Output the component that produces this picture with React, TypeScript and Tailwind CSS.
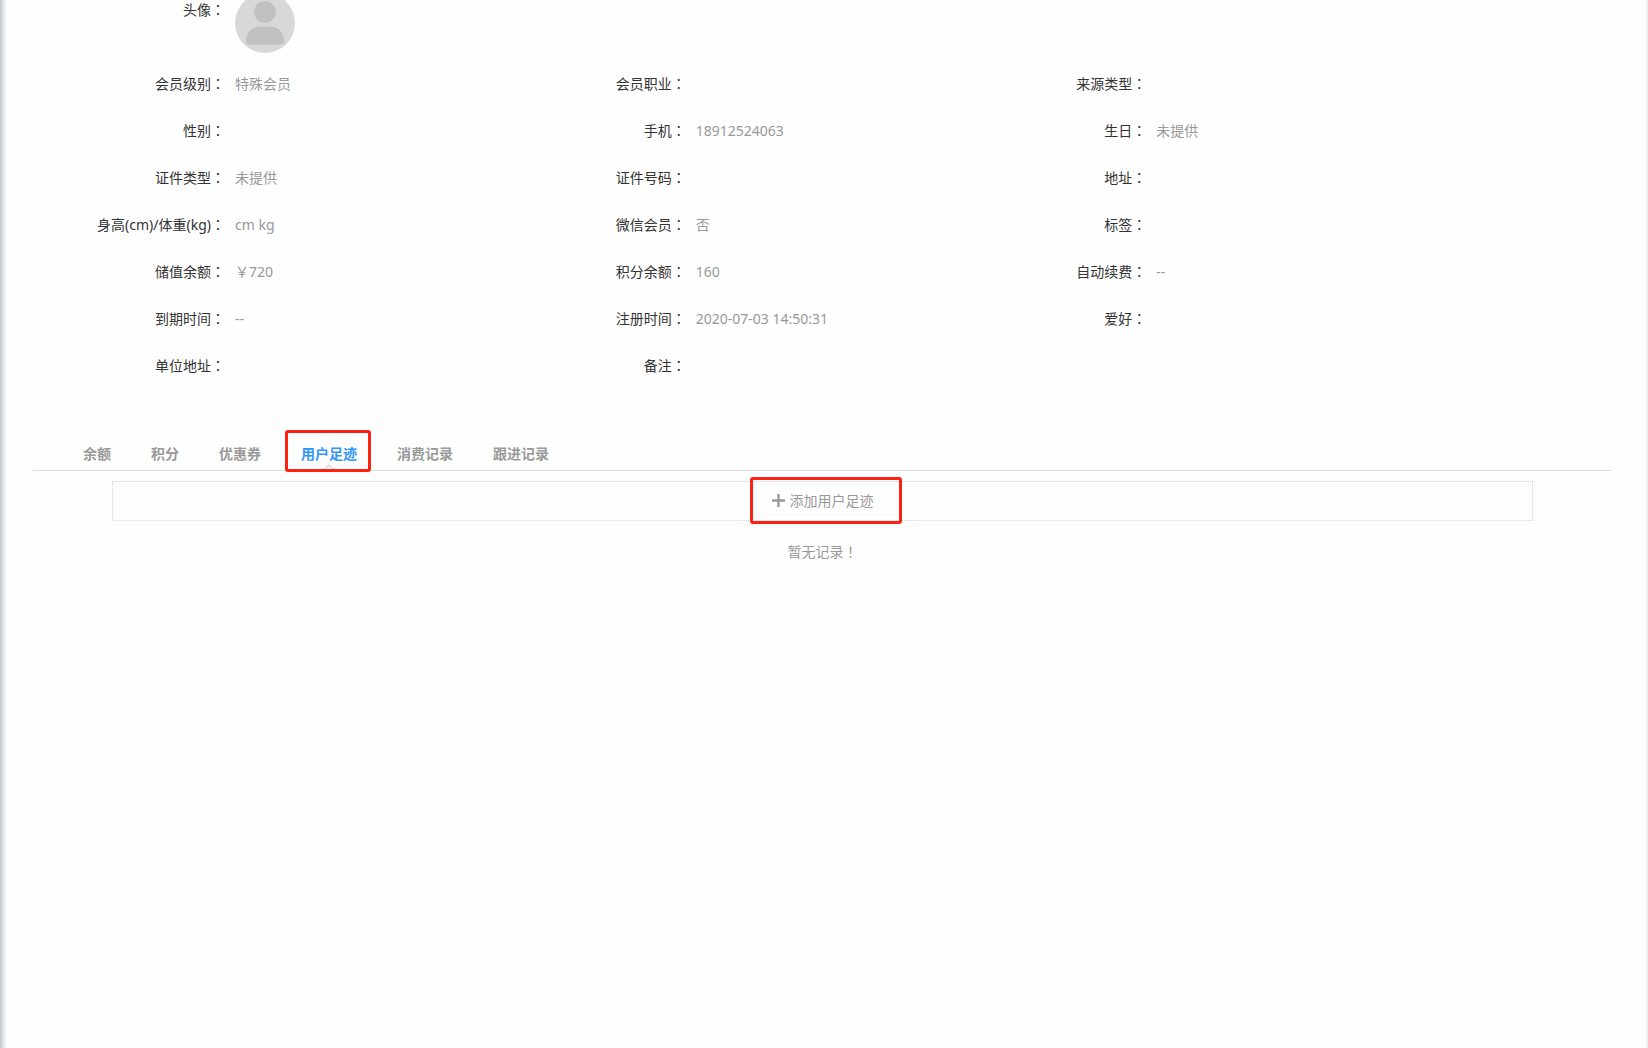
import { Fragment } from "react";

const FIELDS = [
  { label: "会员级别", value: "特殊会员" },
  { label: "会员职业", value: "" },
  { label: "来源类型", value: "" },
  { label: "性别", value: "" },
  { label: "手机", value: "18912524063" },
  { label: "生日", value: "未提供" },
  { label: "证件类型", value: "未提供" },
  { label: "证件号码", value: "" },
  { label: "地址", value: "" },
  { label: "身高(cm)/体重(kg)", value: "cm kg" },
  { label: "微信会员", value: "否" },
  { label: "标签", value: "" },
  { label: "储值余额", value: "￥720" },
  { label: "积分余额", value: "160" },
  { label: "自动续费", value: "--" },
  { label: "到期时间", value: "--" },
  { label: "注册时间", value: "2020-07-03 14:50:31" },
  { label: "爱好", value: "" },
  { label: "单位地址", value: "" },
  { label: "备注", value: "" },
];

const TABS = ["余额", "积分", "优惠券", "用户足迹", "消费记录", "跟进记录"];
const ACTIVE_TAB = "用户足迹";

// The JP face centres full-width punctuation in its cell.
function Mark({ children }: { children: string }) {
  return <span className="font-['Noto_Sans_CJK_JP',sans-serif]">{children}</span>;
}

function Avatar() {
  return (
    <svg viewBox="0 0 60 60" className="size-[60px]" role="img" aria-label="头像">
      <circle cx="30" cy="30" r="30" fill="#d8d8d8" />
      <circle cx="30" cy="19" r="11" fill="#c1c1c1" />
      <path
        d="M11 48.500C11 39 17 33.500 25 33.500h10c8 0 14 5.500 14 15 0 2-1 3-3 3H14c-2 0-3-1-3-3z"
        fill="#c1c1c1"
      />
    </svg>
  );
}

function Highlight({ className }: { className: string }) {
  return (
    <span
      aria-hidden="true"
      className={`pointer-events-none absolute z-10 rounded-[3px] border-3 border-[#fb2113] ${className}`}
    />
  );
}

function MemberInfo() {
  return (
    <section className="pr-[165px] pl-8">
      <dl className="-mt-[7px] flex h-[67px] gap-2.5">
        <dt className="w-40 text-right leading-8">
          头像<Mark>：</Mark>
        </dt>
        <dd>
          <Avatar />
        </dd>
      </dl>
      <dl className="grid grid-cols-3">
        {FIELDS.map((f) => (
          <div key={f.label} className="flex h-[47px] items-center gap-2.5">
            <dt className="w-40 shrink-0 text-right">
              {f.label}
              <Mark>：</Mark>
            </dt>
            <dd className="text-[#999]">{f.value}</dd>
          </div>
        ))}
      </dl>
    </section>
  );
}

function TabBar() {
  return (
    <nav
      role="tablist"
      className="mt-[49px] flex gap-10 border-b border-[#ddd] pl-[50px]"
    >
      {TABS.map((tab) => (
        <Fragment key={tab}>
          {tab === ACTIVE_TAB ? (
            <button
              type="button"
              role="tab"
              aria-selected="true"
              className="relative h-8 font-bold text-[#3296fa]"
            >
              {tab}
              <svg
                viewBox="0 0 12 6"
                className="absolute bottom-0 left-1/2 h-1.5 w-3 -translate-x-1/2"
                fill="none"
                stroke="#ddd"
                strokeWidth="1.500"
              >
                <path d="M1 6l5-5 5 5" />
              </svg>
              <Highlight className="-top-2 -right-3.5 -bottom-0.5 -left-4" />
            </button>
          ) : (
            <button
              type="button"
              role="tab"
              aria-selected="false"
              className="h-8 font-bold text-[#999]"
            >
              {tab}
            </button>
          )}
        </Fragment>
      ))}
    </nav>
  );
}

function Footprints() {
  return (
    <section className="mt-2.5 px-[5%] text-center text-[#999]">
      <button
        type="button"
        className="flex h-10 w-full items-center justify-center border border-dotted border-[#d5d5d5]"
      >
        <span className="relative flex items-center gap-[5px]">
          <svg viewBox="0 0 13 13" className="mb-0.5 size-[13px]" fill="#999">
            <path d="M5.300 0h2.400v5.300H13v2.400H7.700V13H5.300V7.700H0V5.300h5.300z" />
          </svg>
          添加用户足迹
          <Highlight className="-top-3.5 -right-7 -bottom-[13px] -left-[22px]" />
        </span>
      </button>
      <p className="mt-[19px] leading-[22px]">
        暂无记录<Mark>！</Mark>
      </p>
    </section>
  );
}

export default function App() {
  return (
    <div className="flex min-h-screen overflow-hidden bg-[#fefefe] font-['Noto_Sans','Noto_Sans_CJK_SC',sans-serif] text-sm text-[#333]">
      <div className="w-[7px] bg-linear-to-r from-[#c5c9cf] to-[#fefefe]" />
      <main className="min-w-0 flex-1 border-r-2 border-[#f0f0f0] pr-[34px] pl-[26px]">
        <MemberInfo />
        <TabBar />
        <Footprints />
      </main>
    </div>
  );
}
